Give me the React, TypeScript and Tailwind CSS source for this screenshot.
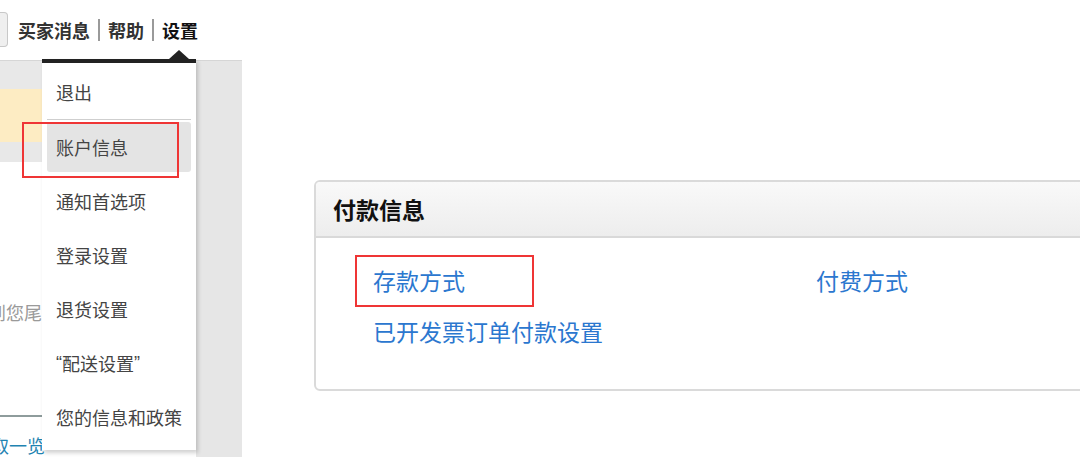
const MENU_ITEMS = [
  "退出",
  "账户信息",
  "通知首选项",
  "登录设置",
  "退货设置",
  "“配送设置”",
  "您的信息和政策",
];

// 引号用西文字体渲染，避免全角留白
function renderLabel(label: string) {
  if (!label.startsWith("“")) return label;
  return (
    <>
      <span className="font-['Liberation_Sans']">“</span>
      {label.slice(1, -1)}
      <span className="font-['Liberation_Sans']">”</span>
    </>
  );
}

function TopNav() {
  return (
    <div className="h-[63px] flex items-center">
      {/* 左侧按钮残边 */}
      <div className="w-[8px] h-[35px] mt-[-2px] rounded-r-[4px] border border-l-0 border-[#c8c8c8] bg-[#efefef]" />
      <div className="flex items-center ml-[10px] text-[18px] font-bold text-[#333] leading-none mt-[-1px]">
        <span>买家消息</span>
        <span className="mx-[8px] w-[2px] h-[22px] bg-[#9a9a9a]" />
        <span>帮助</span>
        <span className="mx-[8px] w-[2px] h-[22px] bg-[#9a9a9a]" />
        <span className="text-[#111]">设置</span>
      </div>
    </div>
  );
}

function DropdownMenu() {
  return (
    <div className="absolute left-[42px] top-[59px] w-[154px] h-[391px] bg-white shadow-[2px_3px_4px_rgba(0,0,0,0.18)]">
      {/* 顶部黑条 + 三角 */}
      <div className="relative h-[4px] bg-[#222]">
        <div className="absolute right-[7px] top-[-9px] w-0 h-0 border-l-[10px] border-r-[10px] border-b-[9px] border-l-transparent border-r-transparent border-b-[#222]" />
      </div>
      <div className="px-[5px] pt-[3px]">
        {MENU_ITEMS.map((item, i) => (
          <div
            key={item}
            className={`h-[54px] flex items-center ${
              i === 0 ? "border-b border-[#cfcfcf]" : ""
            }`}
          >
            <div
              className={`w-full flex items-center pl-[9px] text-[18px] text-[#444] whitespace-nowrap ${
                i === 1 ? "h-[50px] bg-[#e4e4e4] rounded-[3px]" : "h-full"
              }`}
            >
              {renderLabel(item)}
            </div>
          </div>
        ))}
      </div>
    </div>
  );
}

function LeftPane() {
  return (
    <div className="relative w-[242px] shrink-0 flex flex-col h-full">
      <TopNav />
      <div className="flex flex-1 border-t border-[#d6d6d6]">
        <div className="w-[196px] flex flex-col">
          <div className="h-[101px] bg-[#e8e8e8] pt-[28px]">
            <div className="h-[53px] bg-[#fdecc3]" />
          </div>
          <div className="mt-[135px] h-[30px] leading-[30px] text-[18px] text-[#9a9a9a] whitespace-nowrap ml-[-12px]">
            到您尾号
          </div>
          <div className="mt-[88px] h-[2px] bg-[#8e9c9c]" />
          <div className="mt-[16px] text-[18px] leading-[24px] text-[#1f84b2] whitespace-nowrap ml-[-9px]">
            取一览
          </div>
        </div>
        <div className="flex-1 bg-[#e6e6e6]" />
      </div>
      <DropdownMenu />
      {/* 标注框：账户信息 */}
      <div className="absolute left-[22px] top-[122px] w-[157px] h-[56px] border-2 border-[#ef3535]" />
    </div>
  );
}

function PaymentPanel() {
  return (
    <div className="w-[800px] h-[211px] rounded-[6px] border-2 border-[#dadada] overflow-hidden flex flex-col">
      <div className="h-[56px] shrink-0 flex items-center pl-[17px] bg-gradient-to-b from-[#f9f9f9] to-[#ededed] border-b-2 border-[#d9d9d9]">
        <span className="text-[23px] font-bold text-[#111]">付款信息</span>
      </div>
      <div className="relative pt-[17px] pl-[57px] text-[23px] text-[#2b77cf]">
        <div className="grid grid-cols-[443px_1fr] leading-[51px]">
          <span>存款方式</span>
          <span>付费方式</span>
          <span className="col-span-2">已开发票订单付款设置</span>
        </div>
        {/* 标注框：存款方式 */}
        <div className="absolute left-[39px] top-[17px] w-[179px] h-[52px] border-2 border-[#ef3535]" />
      </div>
    </div>
  );
}

export default function App() {
  return (
    <div
      className="w-[1080px] h-[457px] overflow-hidden bg-white flex"
      style={{ fontFamily: '"Noto Sans CJK SC", "Noto Sans", sans-serif' }}
    >
      <LeftPane />
      <div className="flex-1 pl-[72px] pt-[180px]">
        <PaymentPanel />
      </div>
    </div>
  );
}
